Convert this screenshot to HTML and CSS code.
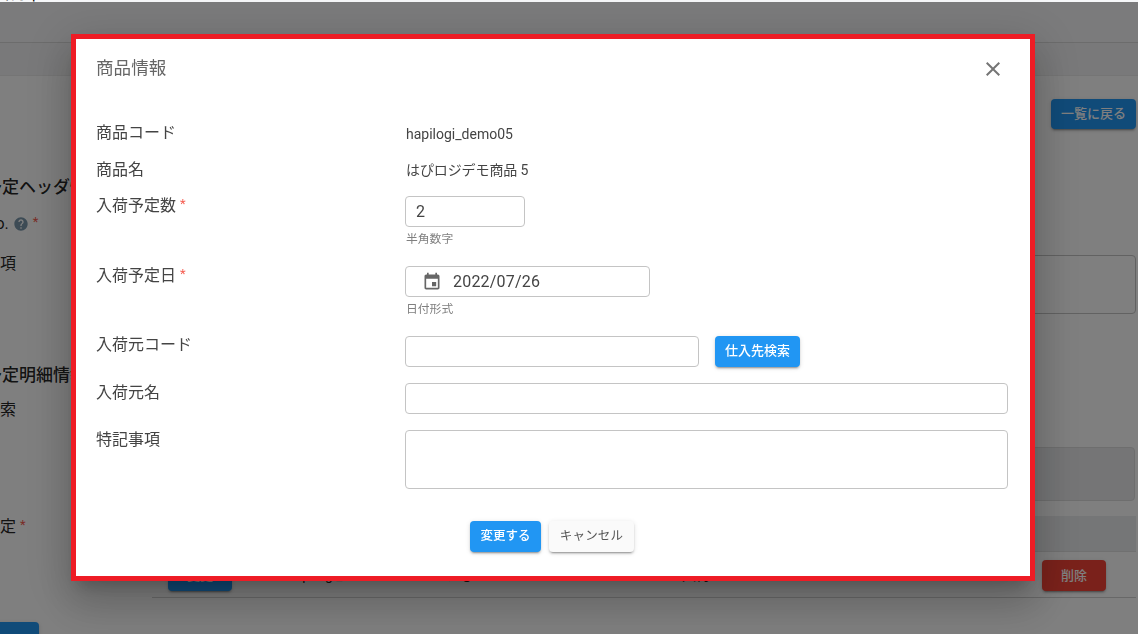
FILE: index.html
```html
<!DOCTYPE html>
<html lang="ja">
<head>
<meta charset="utf-8">
<title>商品情報</title>
<link rel="stylesheet" href="styles.css">
</head>
<body>
<div class="page">
  <header class="top"><div class="crumb">入荷 |</div></header>
  <div class="subbar"></div>
  <main class="main">
    <div class="toolbar"><button class="btn btn-primary btn-back">一覧に戻る</button></div>
    <h2 class="heading">入荷予定ヘッダ情報</h2>
    <div class="bg-row bg-row-no">
      <span class="bg-label">入荷No. <svg class="help" viewBox="0 0 24 24"><path d="M12 2C6.48 2 2 6.48 2 12s4.48 10 10 10 10-4.48 10-10S17.52 2 12 2zm1 17h-2v-2h2v2zm2.07-7.75l-.9.92C13.45 12.9 13 13.5 13 15h-2v-.5c0-1.1.45-2.1 1.17-2.83l1.24-1.26c.37-.36.59-.86.59-1.41 0-1.1-.9-2-2-2s-2 .9-2 2H8c0-2.21 1.79-4 4-4s4 1.79 4 4c0 .88-.36 1.68-.93 2.25z"/></svg> <em class="req">*</em></span>
    </div>
    <div class="bg-row bg-row-note">
      <span class="bg-label">特記事項</span>
      <div class="bg-box"></div>
    </div>
    <h2 class="heading heading-2">入荷予定明細情報</h2>
    <div class="bg-row bg-row-search"><span class="bg-label">商品検索</span></div>
    <div class="bg-row bg-row-gray">
      <span class="bg-label"></span>
      <div class="bg-box bg-box-gray"></div>
    </div>
    <div class="bg-row bg-row-table">
      <span class="bg-label">入荷予定 <em class="req">*</em></span>
      <div class="table">
        <div class="thead"></div>
        <div class="tr">
          <button class="btn btn-primary btn-edit">変更</button>
          <span class="td td-code">hapilogi_demo05</span>
          <span class="td td-name">はぴロジ</span>
          <span class="td td-num">入荷</span>
          <span class="td td-date">2</span>
          <button class="btn btn-danger">削除</button>
        </div>
      </div>
    </div>
    <button class="btn btn-primary btn-bottom">登録する</button>
  </main>
</div>

<div class="backdrop"></div>

<section class="dialog">
  <header class="dialog-head">
    <h1 class="dialog-title">商品情報</h1>
    <svg class="close" viewBox="0 0 24 24"><path d="M19 6.41L17.59 5 12 10.59 6.41 5 5 6.41 10.59 12 5 17.59 6.41 19 12 13.41 17.59 19 19 17.59 13.41 12z"/></svg>
  </header>
  <form class="form">
    <div class="row row-code">
      <div class="label label-text">商品コード</div>
      <div class="value">hapilogi_demo05</div>
    </div>
    <div class="row row-name">
      <div class="label label-text">商品名</div>
      <div class="value value-name">はぴロジデモ商品 5</div>
    </div>
    <div class="row row-helped">
      <div class="label">入荷予定数 <em class="req">*</em></div>
      <div class="field">
        <input class="input input-qty" value="2">
        <div class="helper">半角数字</div>
      </div>
    </div>
    <div class="row row-helped">
      <div class="label">入荷予定日 <em class="req">*</em></div>
      <div class="field">
        <div class="input input-date">
          <svg class="cal" viewBox="0 0 24 24"><path d="M17 12h-5v5h5v-5zM16 1v2H8V1H6v2H5c-1.11 0-1.99.9-1.99 2L3 19c0 1.1.89 2 2 2h14c1.1 0 2-.9 2-2V5c0-1.1-.9-2-2-2h-1V1h-2zm3 18H5V8h14v11z"/></svg>
          <span class="date-text">2022/07/26</span>
        </div>
        <div class="helper">日付形式</div>
      </div>
    </div>
    <div class="row row-plain">
      <div class="label label-first">入荷元コード</div>
      <div class="field field-inline">
        <input class="input input-supplier">
        <button type="button" class="btn btn-primary btn-search">仕入先検索</button>
      </div>
    </div>
    <div class="row row-plain">
      <div class="label">入荷元名</div>
      <div class="field"><input class="input input-full"></div>
    </div>
    <div class="row row-note">
      <div class="label">特記事項</div>
      <div class="field"><textarea class="input textarea"></textarea></div>
    </div>
    <div class="actions">
      <button type="button" class="btn btn-primary btn-act btn-save">変更する</button>
      <button type="button" class="btn btn-default btn-act btn-cancel">キャンセル</button>
    </div>
  </form>
</section>
</body>
</html>
```

FILE: styles.css
```css
* { box-sizing: border-box; }
html, body { margin: 0; height: 100%; overflow: hidden; }
body {
  background: #fff;
  color: rgba(0, 0, 0, .87);
  font-family: Roboto, "Noto Sans CJK JP", sans-serif;
  font-size: 16px;
}
.page { height: 634px; overflow: hidden; }

.top {
  height: 43px;
  background: #f6f7f9;
  border-bottom: 1px solid #d8d8d8;
  overflow: hidden;
}
.crumb {
  margin: -20px 0 0 -9px;
  font-size: 18px;
  line-height: 26px;
  color: #000;
}
.subbar {
  height: 33px;
  background: #f3f3f4;
  border-bottom: 1px solid #ebebeb;
}

.main { margin: 0 2px 0 -48px; }
.toolbar {
  height: 99px;
  padding-top: 23px;
  display: flex;
  justify-content: flex-end;
}
.heading {
  margin: 0 0 0 -1px;
  height: 24px;
  font-size: 17px;
  line-height: 24px;
  font-weight: 500;
}
.heading-2 { margin-top: 49px; }
.bg-row { display: flex; align-items: flex-start; }
.bg-label { width: 200px; flex: none; line-height: 24px; }
.bg-row-no { margin-top: 11px; height: 18px; }
.bg-row-note { height: 59px; margin-top: 27px; }
.bg-row-note .bg-label { margin-top: -3px; }
.bg-row-search { margin-top: 11px; height: 26px; }
.bg-row-gray { margin-top: 23px; height: 54px; }
.bg-row-table { margin-top: 15px; }
.bg-row-table .bg-label { margin-top: -3px; }
.bg-box {
  flex: 1;
  height: 59px;
  border: 1px solid #c4c4c4;
  border-radius: 4px;
  background: #fff;
}
.bg-box-gray {
  height: 54px;
  margin-right: 1px;
  background: #eaebed;
  border-color: #dcdcdc;
}
.help { width: 16px; height: 16px; fill: #7a97ab; vertical-align: -3px; }
.req { color: #f55a4e; font-style: normal; font-size: 13px; vertical-align: 3px; }

.table { flex: 1; }
.thead { height: 36px; background: #ebecee; border-bottom: 1px solid #e0e0e0; }
.tr {
  height: 46px;
  padding: 8px 30px 0 16px;
  display: flex;
  align-items: flex-start;
  border-bottom: 1px solid #d0d0d0;
  font-size: 14px;
}
.td { line-height: 30px; }
.td-code { width: 160px; margin-left: 55px; }
.td-name { width: 235px; }
.td-num { width: 260px; }
.td-date { width: 100px; }
.btn {
  border: 0;
  border-radius: 4px;
  font-family: inherit;
  font-size: 13px;
  font-weight: 500;
  height: 31px;
  padding: 0 10px 2px;
  box-shadow: 0 3px 1px -2px rgba(0,0,0,.2), 0 2px 2px rgba(0,0,0,.14), 0 1px 5px rgba(0,0,0,.12);
}
.btn-primary { background: #2196f3; color: #fff; }
.btn-danger { background: #f44336; color: #fff; width: 64px; flex: none; }
.btn-default { background: #fafafa; color: #555; font-weight: 400; }
.btn-edit { width: 64px; flex: none; }
.btn-back { height: 30px; padding-bottom: 3px; }
.btn-bottom { display: block; width: 87px; height: 48px; margin-top: 24px; }

.backdrop {
  position: fixed;
  inset: 2px 0 0 0;
  background: rgba(0, 0, 0, .5);
}

.dialog {
  position: fixed;
  left: 71px;
  top: 34px;
  width: 964px;
  height: 547px;
  border: 5px solid #ee1c25;
  background: #fff;
  box-shadow: 0 11px 15px -7px rgba(0,0,0,.2), 0 24px 38px 3px rgba(0,0,0,.14), 0 9px 46px 8px rgba(0,0,0,.12);
  padding: 0 22px 0 20px;
}
.dialog-head {
  height: 81px;
  padding-top: 16px;
  display: flex;
  justify-content: space-between;
  align-items: flex-start;
}
.dialog-title {
  margin: 0;
  font-size: 17.6px;
  line-height: 26px;
  font-weight: 400;
  color: #666;
}
.close { width: 24px; height: 24px; fill: #757575; margin: 2px 3px 0 0; }

.row { display: flex; align-items: flex-start; }
.row-code { height: 37px; }
.row-name { height: 39px; }
.row-helped { height: 70px; }
.row-plain { height: 47px; }
.row-note { height: 59px; }
.label {
  width: 309px;
  flex: none;
  line-height: 24px;
  margin-top: -2px;
  font-size: 16px;
  color: #444;
}
.label-text { margin-top: 1px; }
.label-first { margin-top: -3px; }
.row-helped .label { margin-top: -4px; }
.value {
  padding: 2px 0 0 1px;
  font-size: 14px;
  line-height: 24px;
  color: #444;
}
.value-name { padding-top: 1px; letter-spacing: -.1px; }
.field { flex: 1; min-width: 0; }
.field-inline { display: flex; gap: 16px; }
.input {
  display: block;
  height: 31px;
  padding: 0 10px;
  border: 1px solid #c4c4c4;
  border-radius: 4px;
  background: #fff;
  font-family: inherit;
  font-size: 16px;
  color: #444;
  outline: 0;
}
.input-qty { width: 120px; }
.input-date { width: 245px; display: flex; align-items: center; padding-left: 16px; }
.input-supplier { width: 294px; }
.input-full { width: 100%; }
.textarea { width: 100%; height: 59px; resize: none; }
.cal { width: 20px; height: 20px; fill: #666; flex: none; margin-right: 11px; }
.date-text { letter-spacing: .2px; }
.helper {
  margin: 5px 0 0 1px;
  font-size: 11.8px;
  line-height: 15px;
  color: #808080;
}
.btn-search { width: 85px; padding: 0 0 4px; font-size: 13px; }
.actions {
  margin-top: 32px;
  display: flex;
  justify-content: center;
  gap: 8px;
}
.btn-act { height: 31px; padding: 0 0 5px; font-size: 12.5px; }
.btn-save { width: 71px; }
.btn-cancel { width: 85px; letter-spacing: .2px; }
```
